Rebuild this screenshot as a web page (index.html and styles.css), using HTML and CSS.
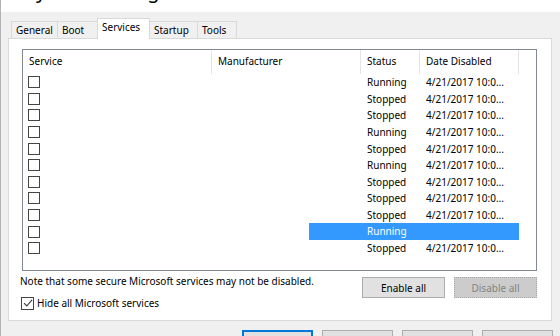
FILE: index.html
```html
<!DOCTYPE html>
<html lang="en">
<head>
  <meta charset="UTF-8" />
  <title>System Configuration</title>
  <link rel="stylesheet" href="styles.css">
</head>
<body>
  <div class="window">
    <div class="caption"><span>System Configuration</span></div>

    <div class="tabs">
      <div class="tab t-general">General</div>
      <div class="tab t-boot">Boot</div>
      <div class="tab t-services active">Services</div>
      <div class="tab t-startup">Startup</div>
      <div class="tab t-tools">Tools</div>
    </div>

    <div class="panel">
      <div class="listview">
        <div class="lv-head">
          <div class="col">Service</div>
          <div class="col">Manufacturer</div>
          <div class="col">Status</div>
          <div class="col">Date Disabled</div>
          <div class="col"></div>
        </div>
        <div class="lv-row"><span class="cb"></span><span></span><span class="cell">Running</span><span class="cell">4/21/2017 10:0...</span></div>
        <div class="lv-row"><span class="cb"></span><span></span><span class="cell">Stopped</span><span class="cell">4/21/2017 10:0...</span></div>
        <div class="lv-row"><span class="cb"></span><span></span><span class="cell">Stopped</span><span class="cell">4/21/2017 10:0...</span></div>
        <div class="lv-row"><span class="cb"></span><span></span><span class="cell">Running</span><span class="cell">4/21/2017 10:0...</span></div>
        <div class="lv-row"><span class="cb"></span><span></span><span class="cell">Stopped</span><span class="cell">4/21/2017 10:0...</span></div>
        <div class="lv-row"><span class="cb"></span><span></span><span class="cell">Running</span><span class="cell">4/21/2017 10:0...</span></div>
        <div class="lv-row"><span class="cb"></span><span></span><span class="cell">Stopped</span><span class="cell">4/21/2017 10:0...</span></div>
        <div class="lv-row"><span class="cb"></span><span></span><span class="cell">Stopped</span><span class="cell">4/21/2017 10:0...</span></div>
        <div class="lv-row"><span class="cb"></span><span></span><span class="cell">Stopped</span><span class="cell">4/21/2017 10:0...</span></div>
        <div class="lv-row"><span class="cb"></span><span class="sel">Running</span></div>
        <div class="lv-row"><span class="cb"></span><span></span><span class="cell">Stopped</span><span class="cell">4/21/2017 10:0...</span></div>
      </div>

      <div class="footer">
        <div class="notes">
          <p class="note">Note that some secure Microsoft services may not be disabled.</p>
          <label class="hide">
            <span class="cb checked">
              <svg width="10" height="10" viewBox="0 0 10 10"><path d="M1 5.2 L3.8 8 L9 1.8" fill="none" stroke="#333" stroke-width="1.1"/></svg>
            </span>
            Hide all Microsoft services
          </label>
        </div>
        <div class="actions">
          <button class="btn">Enable all</button>
          <button class="btn" disabled>Disable all</button>
        </div>
      </div>
    </div>

    <div class="dialog-buttons">
      <button class="btn big default">OK</button>
      <button class="btn big">Cancel</button>
      <button class="btn big">Apply</button>
      <button class="btn big">Help</button>
    </div>
  </div>
</body>
</html>
```

FILE: styles.css
```css
body {
  margin: 0;
  background: #f0f0f0;
  font-family: "Noto Sans", "Open Sans", sans-serif;
  font-size: 10px;
  color: #000;
}

.window {
  height: 336px;
  overflow: hidden;
  border-left: 1px solid #b4b4b4;
}

/* caption is cut off at the top, only the descenders show */
.caption {
  height: 12px;
  background: #fff;
  overflow: hidden;
}

.caption span {
  display: block;
  font-size: 20px;
  line-height: 20px;
  margin-top: -19px;
  padding-left: 24px;
}

.tabs {
  display: flex;
  align-items: flex-end;
  height: 26px;
  margin-left: 10px;
  position: relative;
  z-index: 1;
}

.tab {
  height: 17px;
  line-height: 16px;
  padding-left: 4px;
  border: 1px solid #d9d9d9;
  border-bottom: none;
  border-right: none;
  box-sizing: border-box;
  background: #f0f0f0;
  white-space: nowrap;
}

.t-general { width: 46px; }
.t-boot { width: 40px; }
.t-services { width: 53px; }
.t-startup { width: 47px; }
.t-tools { width: 40px; border-right: 1px solid #d9d9d9; }

.tab.active {
  height: 21px;
  line-height: 17px;
  background: #fff;
  border-right: 1px solid #d9d9d9;
  margin-bottom: -1px;
  padding-left: 4px;
}

.tab.active + .tab {
  border-left: none;
}

.panel {
  margin: 0 8px 0 7px;
  height: 283px;
  box-sizing: border-box;
  background: #fff;
  border: 1px solid #d9d9d9;
  padding: 10px 14px 0 13px;
}

.listview {
  height: 222px;
  box-sizing: border-box;
  border: 1px solid #828790;
}

.lv-head, .lv-row {
  display: grid;
  grid-template-columns: 189px 149px 59px 99px 1fr;
}

.lv-head {
  height: 24px;
}

.lv-head .col {
  border-right: 1px solid #e5e5e5;
  padding-left: 6px;
  line-height: 22px;
}

.lv-head .col:last-child {
  border-right: none;
}

.lv-row {
  height: 16.6px;
  align-items: center;
}

.lv-row .cell {
  padding-left: 6px;
  white-space: nowrap;
}

.cb {
  display: block;
  width: 12px;
  height: 12px;
  box-sizing: border-box;
  border: 1px solid #444;
  margin-left: 5px;
  background: #fff;
}

.lv-row .sel {
  grid-column: 2 / 5;
  align-self: stretch;
  margin-left: 97px;
  padding-left: 58px;
  background: #3399ff;
  color: #fff;
  line-height: 16.6px;
}

.footer {
  display: flex;
  justify-content: space-between;
}

.note {
  margin: 3px 0 0 -2px;
  line-height: 14px;
}

.hide {
  display: flex;
  align-items: center;
  gap: 3px;
  margin-top: 8px;
  margin-left: -1px;
}

.hide .cb {
  width: 13px;
  height: 13px;
  margin-left: 0;
  display: flex;
  align-items: center;
  justify-content: center;
}

.actions {
  display: flex;
  gap: 9px;
  margin-top: 6px;
  align-items: flex-start;
}

.btn {
  width: 83px;
  height: 21px;
  font-family: inherit;
  font-size: 10px;
  color: #000;
  background: #e1e1e1;
  border: 1px solid #adadad;
  padding: 0;
}

.btn:disabled {
  background: #cccccc;
  color: #838383;
  border: 1px dotted #a8a8a8;
}

.dialog-buttons {
  display: flex;
  justify-content: flex-end;
  gap: 9px;
  margin: 9px 7px 0 0;
}

.btn.big {
  width: 71px;
  height: 23px;
}

.btn.default {
  border: 1px solid #0078d7;
  box-shadow: inset 0 0 0 1px #0078d7;
}
```
